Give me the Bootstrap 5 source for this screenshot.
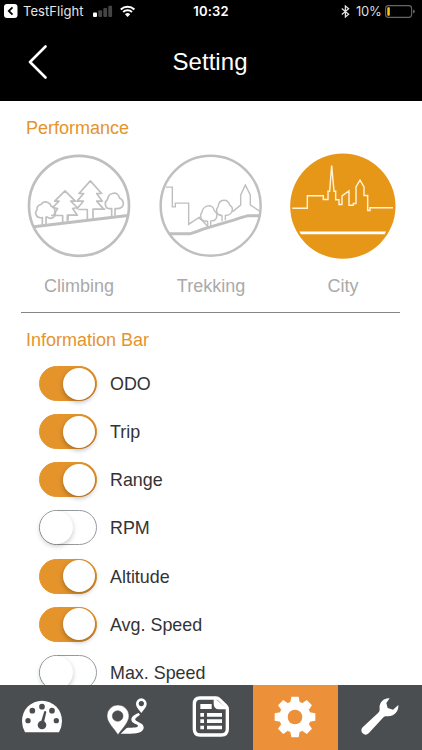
<!DOCTYPE html>
<html lang="en">
<head>
<meta charset="utf-8">
<meta name="viewport" content="width=device-width, initial-scale=1">
<title>Setting</title>
<link href="https://cdn.jsdelivr.net/npm/bootstrap@5.3.0/dist/css/bootstrap.min.css" rel="stylesheet">
<style>
body{font-family:"Liberation Sans",Arial,sans-serif;color:#333336;background:#fff}
svg{display:block;flex:none}
.screen{height:750px}
.topbar{height:101px;background:#000;color:#fff}
.status{height:22px;font:13px/22px Inter,sans-serif;padding:0 7px 0 4px}
.status .app-name{margin-left:5px;width:70px;letter-spacing:.05px;color:#e6e6e6}
.status .clock{font-weight:600;letter-spacing:.2px;padding-left:3px}
.status .charge{letter-spacing:-.3px;margin:0 3px 0 6px;width:26px;color:#ddd}
.side{flex:1 1 0}
.bars{margin-top:-4px}
.wifi{margin-left:7px}
.titlebar{height:79px}
.titlebar h1{font-size:24px;letter-spacing:.05px;line-height:28px;margin:0 2px 0 0}
.titlebar .side{padding-left:28px}
.accent{color:#e5942c}
.sec-title{font-size:18px;line-height:22px;margin:0;padding-left:26px}
.modes{padding:14px 0 0 13px}
.mode{width:132px;color:#aaa;font-size:18px;line-height:22px;gap:16px}
.rule{height:1px;margin:15px 22px 0 21px;background:#858585}
.switches{padding:9px 0 0 39px}
.switch-row{height:48.15px;font-size:17.900px;gap:13px}
.switch-row label{line-height:22px}
.form-switch .form-check-input.toggle{width:58px;height:35px;border-radius:18px;border:1.5px solid #979a9b;background:#fff;padding:0;margin:-1px 0 0;position:relative;flex:none;opacity:1}
.form-switch .form-check-input.toggle::after{content:"";position:absolute;top:0;left:0;width:33px;height:33px;border-radius:50%;background:#fff;box-shadow:0 2px 5px rgba(0,0,0,.22)}
.form-switch .form-check-input.toggle:checked{background:#e5942c;border-color:#e5942c}
.form-switch .form-check-input.toggle:checked::after{left:22.500px;top:.5px;width:32px;height:32px;box-shadow:0 2px 5px rgba(0,0,0,.3)}
.tabs{height:65.5px;background:#4b4e50}
.tabs a{flex:1 1 0;height:65.5px}
.tabs a.active{background:#ec9039}
</style>
<script src="https://cdn.jsdelivr.net/npm/bootstrap@5.3.0/dist/js/bootstrap.bundle.min.js"></script>
</head>
<body>
<div class="screen d-flex flex-column overflow-hidden">
<header class="topbar flex-shrink-0">
  <div class="status d-flex align-items-center">
    <div class="side d-flex align-items-center">
      <svg width="14" height="14" viewBox="0 0 14 14"><rect width="13.5" height="14" rx="3" fill="#fff"/><path d="M8.5 3.4 4.8 7l3.7 3.6" fill="none" stroke="#000" stroke-width="1.8"/></svg>
      <span class="app-name">TestFlight</span>
      <svg class="bars" width="20" height="15" viewBox="0 0 20 15"><rect y="10.5" width="4" height="4.5" rx="1" fill="#fff"/><g fill="#444"><rect x="5.3" y="8.3" width="3.8" height="6.7" rx="1"/><rect x="10.3" y="6" width="3.8" height="9" rx="1"/><rect x="15.3" y="3.7" width="3.8" height="11.3" rx="1"/></g></svg>
      <svg class="wifi" width="16" height="12" viewBox="0 0 16 12"><g fill="none" stroke="#fff" stroke-width="2"><path d="M.8 4.5a10 10 0 0 1 13.6 0M3.2 7.1a6.4 6.4 0 0 1 8.8 0"/></g><path d="M5 9.2a3.7 3.7 0 0 1 5.2 0L7.6 12z" fill="#fff"/></svg>
    </div>
    <span class="clock">10:32</span>
    <div class="side d-flex align-items-center justify-content-end">
      <svg width="9" height="13" viewBox="0 0 9 13"><path d="M.8 3.4 7.6 9.3 4.4 12V1l3.2 2.7L.8 9.6" fill="none" stroke="#ddd" stroke-width="1.3"/></svg>
      <span class="charge">10%</span>
      <svg width="30" height="13" viewBox="0 0 30 13"><rect x=".6" y=".6" width="26" height="11.8" rx="2.8" fill="none" stroke="#666" stroke-width="1.1"/><rect x="2.3" y="2.3" width="2.5" height="8.4" rx=".8" fill="#fbc615"/><path d="M28.2 4.5q1.5.4 1.5 2t-1.5 2z" fill="#777"/></svg>
    </div>
  </div>
  <div class="titlebar d-flex align-items-center">
    <div class="side"><svg width="20" height="34" viewBox="0 0 20 34"><path d="M17.5 1.5 2 17l15.500 15.500" fill="none" stroke="#fff" stroke-width="2.600" stroke-linecap="round" stroke-linejoin="round"/></svg></div>
    <h1 class="fw-normal">Setting</h1>
    <div class="side"></div>
  </div>
</header>
<main class="flex-grow-1 overflow-hidden">
  <h2 class="sec-title accent fw-normal pt-3">Performance</h2>
  <div class="modes d-flex">
    <div class="mode d-flex flex-column align-items-center">
      <svg width="106" height="106" viewBox="33 130.500 318 318" fill="none" stroke="#c0bfbf" stroke-width="5" stroke-linejoin="round">
        <circle cx="192" cy="289" r="150" stroke-width="8"/>
        <path d="M56 352 338 318" stroke-width="9"/>
        <path d="M82 345V324q-13 3-18-6-5-10 2-17-1-14 12-16 8-12 22-5 7 4 8 10 14 3 11 17 6 11-5 17-9 6-17-1H93v21"/>
        <path d="M108 318h35v20M157 336v-19h30l-14-20 14-3-20-19h14l-31-31-31 31h13l-19 19 15 3-12 19"/>
        <path d="M159 333v-16M190 300h27v29M234 327v-28h32l-21-24h17l-17-23h15l-34-38-34 38h14l-20 23h19l-20 24M236 299h35"/>
        <path d="M290 321v-24q-18 3-19-12-1-10 6-14 3-17 15-19 17-5 22 14 11 5 11 17-2 17-25 14v22"/>
      </svg>
      <span>Climbing</span>
    </div>
    <div class="mode d-flex flex-column align-items-center">
      <svg width="106" height="106" viewBox="39 25.500 318 318" fill="none" stroke="#c0bfbf" stroke-width="4.200">
        <circle cx="197" cy="184" r="150" stroke-width="7.500"/>
        <path d="M73 268h61q20-5 40-14l94-28q20-7 39-12h40" stroke-width="9"/>
        <path d="M63 128h19v59h9v-11h40v64l31-21 6 7M131 239l32-20 27 29"/>
        <path d="M188 247v-17q-13 2-19-7-5-12 2-20 2-14 15-18 18-5 22 14 10 6 7 19-4 12-18 11v15M188 230l-8 2" stroke-linejoin="round"/>
        <path d="M231 230v-17q-14-1-16-12-1-9 4-14 2-16 13-19 17-4 23 15 10 5 6 17-4 13-20 13v14" stroke-linejoin="round"/>
        <path d="m262 202 25-20v-31l14-29 15 29v30l29 20"/>
      </svg>
      <span>Trekking</span>
    </div>
    <div class="mode accent d-flex flex-column align-items-center">
      <svg width="106" height="106" viewBox="45 25.500 318 318" fill="none" stroke="#fff3d7">
        <circle cx="203.500" cy="185" r="158" fill="#e79717" stroke="none"/>
        <path d="M52 191h45v-37h48v11h14v-25h5l6-77 7 77h5v26h10v14h9v-26l21-15v43h13v-5h8v-50l12-20 12 20v26h11v45h7v-8h69" stroke-width="4.300"/>
        <path d="M73 261h260l-4 8H78z" fill="#fff" stroke="none"/>
      </svg>
      <span>City</span>
    </div>
  </div>
  <div class="rule"></div>
  <h2 class="sec-title accent fw-normal pt-3">Information Bar</h2>
  <div class="switches">
    <div class="switch-row form-switch ps-0 d-flex align-items-center"><input class="form-check-input toggle" type="checkbox" role="switch" id="odo" checked><label for="odo">ODO</label></div>
    <div class="switch-row form-switch ps-0 d-flex align-items-center"><input class="form-check-input toggle" type="checkbox" role="switch" id="trip" checked><label for="trip">Trip</label></div>
    <div class="switch-row form-switch ps-0 d-flex align-items-center"><input class="form-check-input toggle" type="checkbox" role="switch" id="range" checked><label for="range">Range</label></div>
    <div class="switch-row form-switch ps-0 d-flex align-items-center"><input class="form-check-input toggle" type="checkbox" role="switch" id="rpm"><label for="rpm">RPM</label></div>
    <div class="switch-row form-switch ps-0 d-flex align-items-center"><input class="form-check-input toggle" type="checkbox" role="switch" id="alt" checked><label for="alt">Altitude</label></div>
    <div class="switch-row form-switch ps-0 d-flex align-items-center"><input class="form-check-input toggle" type="checkbox" role="switch" id="avg" checked><label for="avg">Avg. Speed</label></div>
    <div class="switch-row form-switch ps-0 d-flex align-items-center"><input class="form-check-input toggle" type="checkbox" role="switch" id="max"><label for="max">Max. Speed</label></div>
  </div>
</main>
<nav class="tabs d-flex flex-shrink-0" aria-label="Main">
  <a href="#" class="d-flex align-items-center justify-content-center" aria-label="Dashboard">
    <svg width="42" height="42" viewBox="63 50 126 126"><path d="M75 159q-9-17-9-34a60 61 0 0 1 120 0q0 17-9 34z" fill="#fff"/><g fill="#4b4e50"><circle cx="84" cy="124" r="8"/><circle cx="97" cy="94" r="8.500"/><circle cx="126" cy="82" r="8.500"/><circle cx="156" cy="94" r="8.500"/><circle cx="169" cy="124" r="8"/><circle cx="126" cy="137" r="13"/><path d="m122 130 11-34q4-2 6 2l-8 35z"/></g></svg>
  </a>
  <a href="#" class="d-flex align-items-center justify-content-center" aria-label="Route">
    <svg width="42" height="42" viewBox="317 50 126 126"><path d="M361 163c16 0 34 1 46-1 14-2 24-9 23-19-2-14-21-14-25-22-2-5 7-9 14-15l-4-5c-12 4-22 11-22 20 1 13 21 12 20 19-2 7-23 4-34 6z" fill="#fff"/><path fill-rule="evenodd" d="M353 166c-12-18-33-37-33-56a33 33 0 0 1 66 0c0 19-21 39-33 56zM352 94a16 16 0 1 0 .1 0z" fill="#fff" stroke="#4b4e50" stroke-width="1.500"/><path fill-rule="evenodd" d="M423 101c-6-9-16-18-16-28a16 16 0 0 1 32 0c0 10-10 19-16 28zM423 65a8 8 0 1 0 .1 0z" fill="#fff"/></svg>
  </a>
  <a href="#" class="d-flex align-items-center justify-content-center" aria-label="Records">
    <svg width="42" height="42" viewBox="119 50 126 126"><path d="M149 56h48q6 0 10 4l20 20q4 4 4 10v59q0 18-18 18h-64q-17 0-17-18V74q0-18 17-18z" fill="none" stroke="#fff" stroke-width="10"/><path d="M190 54v18q0 18 16 18h26z" fill="#fff"/><g fill="#fff"><path d="M150 74h34v15h-34zM150 101h11v11h-11zM170 101h45v11h-45zM150 120h11v11h-11zM170 120h45v11h-45zM150 139h11v11h-11zM170 139h45v11h-45z"/></g></svg>
  </a>
  <a href="#" class="active d-flex align-items-center justify-content-center" aria-label="Settings">
    <svg width="42" height="42" viewBox="-63 -63 126 126"><g fill="#fff"><circle r="47"/><g id="teeth"><path id="tooth" d="M-14-44-11-61h22l3 17zM-14 44l3 17h22l3-17z"/><use href="#tooth" transform="rotate(45)"/></g><use href="#teeth" transform="rotate(90)"/></g><circle r="22" fill="#ec9039"/></svg>
  </a>
  <a href="#" class="d-flex align-items-center justify-content-center" aria-label="Service">
    <svg width="42" height="42" viewBox="230 50 126 126"><path d="M322 57c-18-2-33 14-30 32 0 6-1 8-5 12l-46 43c-12 12 6 30 18 18l43-47c5-5 8-5 14-4 19 1 34-16 32-34l-16 14-16-5-4-15z" fill="#fff"/></svg>
  </a>
</nav>
</div>
</body>
</html>
